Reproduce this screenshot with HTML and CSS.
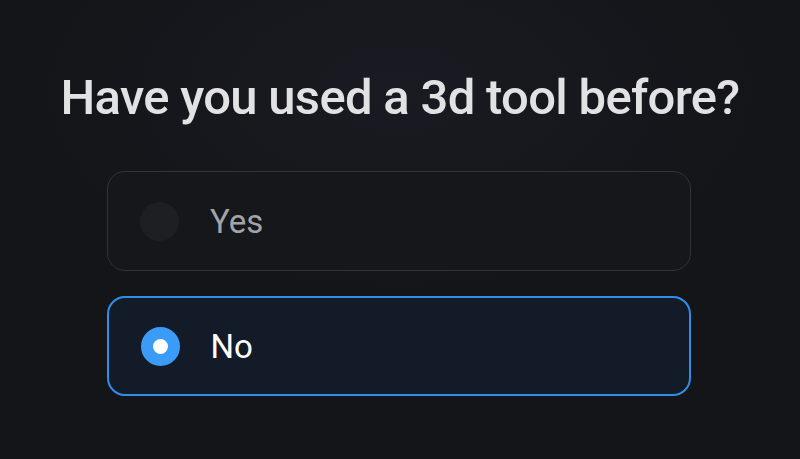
FILE: index.html
```html
<!DOCTYPE html>
<html>
<head>
<meta charset="utf-8">
<link rel="stylesheet" href="styles.css">
</head>
<body>
<main class="page">
  <h1 class="title">Have you used a 3d tool before?</h1>
  <div class="options">
    <label class="option">
      <span class="radio"></span>
      <span class="label">Yes</span>
    </label>
    <label class="option selected">
      <span class="radio"></span>
      <span class="label">No</span>
    </label>
  </div>
</main>
</body>
</html>
```
FILE: styles.css
```css
html, body {
  margin: 0;
  padding: 0;
}
body {
  background: #141519;
  font-family: Roboto, "Liberation Sans", Arial, sans-serif;
  width: 800px;
  height: 459px;
  overflow: hidden;
}
.page {
  display: flex;
  flex-direction: column;
  align-items: center;
  padding-top: 62px;
  background: radial-gradient(ellipse 360px 200px at 400px 90px, #1a1b22 0%, rgba(20,21,25,0) 100%);
  height: 397px;
}
.title {
  margin: 0;
  font-size: 49px;
  line-height: 58px;
  font-weight: 500;
  color: #e2e2e4;
  letter-spacing: -0.7px;
  padding-top: 7px;
}
.options {
  margin-top: 44px;
  margin-right: 2px;
  width: 584px;
  display: flex;
  flex-direction: column;
  gap: 25px;
}
.option {
  box-sizing: border-box;
  height: 100px;
  border: 1.5px solid #333438;
  border-radius: 18px;
  background: #16171b;
  display: flex;
  align-items: center;
  padding-left: 32px;
}
.radio {
  width: 39px;
  height: 39px;
  border-radius: 50%;
  background: #1e1f22;
  box-sizing: border-box;
  flex: none;
}
.label {
  margin-left: 31px;
  font-size: 33px;
  color: #a3a4a8;
}
.option.selected {
  border: 2px solid #2f8fe8;
  background: #131a28;
  padding-left: 31.5px;
}
.option.selected .radio {
  background: #ffffff;
  border: 12px solid #3a9cf7;
}
.option.selected .label {
  color: #ffffff;
}
```
